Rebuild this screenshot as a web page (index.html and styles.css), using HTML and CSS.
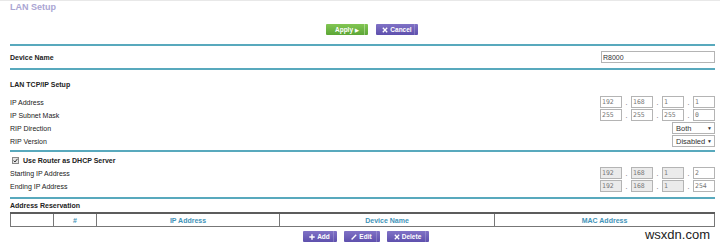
FILE: index.html
```html
<!DOCTYPE html>
<html lang="en">
  <head>
    <meta charset="UTF-8" />
    <title>LAN Setup</title>
    <link rel="stylesheet" href="styles.css">
  </head>
  <body>
    <div class="page">
      <h1 class="title">LAN Setup</h1>

      <div class="actions top">
        <button class="btn green">Apply <span class="tri">&#9654;</span></button>
        <button class="btn purple">
          <svg width="6" height="6" viewBox="0 0 6 6"><path d="M0.8 0.8 L5.2 5.2 M5.2 0.8 L0.8 5.2" stroke="#fff" stroke-width="1.3"/></svg>
          Cancel
        </button>
      </div>

      <!-- Device name -->
      <section class="sect device">
        <div class="row">
          <span class="bold">Device Name</span>
          <input class="txt" type="text" value="R8000" />
        </div>
      </section>

      <!-- LAN TCP/IP -->
      <section class="sect tcp">
        <div class="head">LAN TCP/IP Setup</div>
        <div class="rows">
          <div class="row">
            <span>IP Address</span>
            <div class="ip">
              <input class="oct" value="192" /><span class="dot">.</span>
              <input class="oct" value="168" /><span class="dot">.</span>
              <input class="oct" value="1" /><span class="dot">.</span>
              <input class="oct" value="1" />
            </div>
          </div>
          <div class="row">
            <span>IP Subnet Mask</span>
            <div class="ip">
              <input class="oct" value="255" /><span class="dot">.</span>
              <input class="oct" value="255" /><span class="dot">.</span>
              <input class="oct" value="255" /><span class="dot">.</span>
              <input class="oct" value="0" />
            </div>
          </div>
          <div class="row">
            <span>RIP Direction</span>
            <div class="sel"><span>Both</span><span class="arr">&#9660;</span></div>
          </div>
          <div class="row">
            <span>RIP Version</span>
            <div class="sel"><span>Disabled</span><span class="arr">&#9660;</span></div>
          </div>
        </div>
      </section>

      <!-- DHCP -->
      <section class="sect dhcp">
        <div class="rows">
          <div class="row check">
            <span class="cb">
              <svg width="5" height="5" viewBox="0 0 5 5"><path d="M0.6 2.6 L2 4 L4.5 0.8" stroke="#333" stroke-width="1" fill="none"/></svg>
            </span>
            <span class="bold">Use Router as DHCP Server</span>
          </div>
          <div class="row">
            <span>Starting IP Address</span>
            <div class="ip">
              <input class="oct off" value="192" /><span class="dot">.</span>
              <input class="oct off" value="168" /><span class="dot">.</span>
              <input class="oct off" value="1" /><span class="dot">.</span>
              <input class="oct" value="2" />
            </div>
          </div>
          <div class="row">
            <span>Ending IP Address</span>
            <div class="ip">
              <input class="oct off" value="192" /><span class="dot">.</span>
              <input class="oct off" value="168" /><span class="dot">.</span>
              <input class="oct off" value="1" /><span class="dot">.</span>
              <input class="oct" value="254" />
            </div>
          </div>
        </div>
      </section>

      <!-- Address reservation -->
      <section class="sect resv">
        <div class="head">Address Reservation</div>
        <table class="grid">
          <tr>
            <th class="c1"></th>
            <th class="c2">#</th>
            <th class="c3">IP Address</th>
            <th class="c4">Device Name</th>
            <th class="c5">MAC Address</th>
          </tr>
        </table>
        <div class="actions bottom">
          <button class="btn purple add">
            <svg width="6" height="6" viewBox="0 0 6 6"><path d="M3 0.3 V5.7 M0.3 3 H5.7" stroke="#fff" stroke-width="1.4"/></svg>
            Add
          </button>
          <button class="btn purple edit">
            <svg width="6" height="6" viewBox="0 0 6 6"><path d="M0.6 5.4 L5.2 0.8" stroke="#fff" stroke-width="1.4"/></svg>
            Edit
          </button>
          <button class="btn purple">
            <svg width="6" height="6" viewBox="0 0 6 6"><path d="M0.8 0.8 L5.2 5.2 M5.2 0.8 L0.8 5.2" stroke="#fff" stroke-width="1.3"/></svg>
            Delete
          </button>
          <span class="wm">wsxdn.com</span>
        </div>
      </section>
      <div class="sect end"></div>
    </div>
  </body>
</html>
```

FILE: styles.css
```css
body {
  margin: 0;
  font-family: "Liberation Sans", Arial, sans-serif;
  font-size: 7px;
  color: #222;
  background: #fff;
}
.page {
  border-top: 1px solid #e8e8e8;
  padding: 0 5px 0 10px;
}
.title {
  margin: 0;
  font-size: 9px;
  line-height: 12px;
  font-weight: bold;
  color: #aaa5d3;
}
.bold {
  font-weight: bold;
}
.actions {
  display: flex;
  justify-content: center;
  align-items: center;
  gap: 8px;
}
.actions.top {
  margin: 11px 0 9px;
  padding-left: 19px;
  height: 11px;
}
.actions.bottom {
  position: relative;
  margin-top: 4px;
  padding-left: 6px;
  height: 11px;
  gap: 7px;
}
.btn {
  height: 11px;
  min-width: 42px;
  padding: 0 4px;
  border: 0;
  border-radius: 1px;
  display: inline-flex;
  align-items: center;
  justify-content: center;
  gap: 2px;
  color: #fff;
  font-family: "Liberation Sans", Arial, sans-serif;
  font-size: 6.5px;
  font-weight: bold;
  cursor: pointer;
}
.btn.green {
  background:
    linear-gradient(to right, transparent calc(100% - 4px), rgba(255, 255, 255, 0.35) calc(100% - 4px), rgba(255, 255, 255, 0.35) calc(100% - 3px), transparent calc(100% - 3px)),
    linear-gradient(#82c653, #5ca636);
}
.btn.purple {
  background:
    linear-gradient(to right, transparent calc(100% - 4px), rgba(255, 255, 255, 0.2) calc(100% - 4px), rgba(255, 255, 255, 0.2) calc(100% - 3px), transparent calc(100% - 3px)),
    linear-gradient(#8072c6, #5e50ad);
}
.btn.add {
  min-width: 34px;
}
.btn.edit {
  min-width: 36px;
}
.tri {
  font-size: 5px;
}
.wm {
  position: absolute;
  right: 5px;
  top: -4px;
  font-size: 13px;
  color: #222;
}
.sect {
  border-top: 2px solid #58a9bd;
}
.row {
  display: flex;
  justify-content: space-between;
  align-items: center;
  height: 12px;
}
.device {
  padding: 2px 0;
}
.device .row {
  height: 18px;
}
.head {
  font-weight: bold;
  line-height: 12px;
}
.rows {
  display: flex;
  flex-direction: column;
  gap: 1px;
}
.tcp {
  padding: 9px 0 3px;
}
.tcp .rows {
  margin-top: 5px;
}
.dhcp {
  padding: 2px 0 5px;
}
.resv {
  padding: 1px 0 4px;
}
input {
  box-sizing: border-box;
  margin: 0;
  border: 1px solid #b4b4b4;
  outline: none;
}
.txt {
  width: 114px;
  height: 12px;
  padding: 0 1px;
  font-family: "Liberation Sans", Arial, sans-serif;
  font-size: 7px;
  color: #333;
}
.ip {
  display: flex;
  align-items: center;
}
.oct {
  width: 22px;
  height: 12px;
  padding: 0 1px;
  font-family: "DejaVu Sans Mono", monospace;
  font-size: 6.5px;
  color: #777;
  background: #fff;
}
.oct.off {
  background: #ebebeb;
}
.dot {
  width: 9px;
  text-align: center;
  color: #555;
}
.sel {
  box-sizing: border-box;
  width: 43px;
  height: 12px;
  border: 1px solid #b4b4b4;
  display: flex;
  justify-content: space-between;
  align-items: center;
  padding: 0 2px 0 3px;
  color: #333;
  font-size: 7.5px;
}
.arr {
  font-size: 5px;
}
.row.check {
  justify-content: flex-start;
  gap: 4px;
  padding-left: 2px;
}
.cb {
  box-sizing: border-box;
  width: 7px;
  height: 7px;
  border: 1px solid #888;
  background: #e4e4e4;
  display: flex;
  align-items: center;
  justify-content: center;
}
.grid {
  width: 100%;
  border-collapse: collapse;
}
.grid th {
  height: 12px;
  padding: 0;
  border: 1px solid #777;
  border-top: 2px solid #5c5c5c;
  color: #3f93b8;
  font-weight: bold;
  font-size: 7px;
  line-height: 9px;
}
.c1, .c2 {
  width: 42px;
}
.c3 {
  width: 182px;
}
.c4 {
  width: 214px;
}
.end {
  height: 0;
}
```
